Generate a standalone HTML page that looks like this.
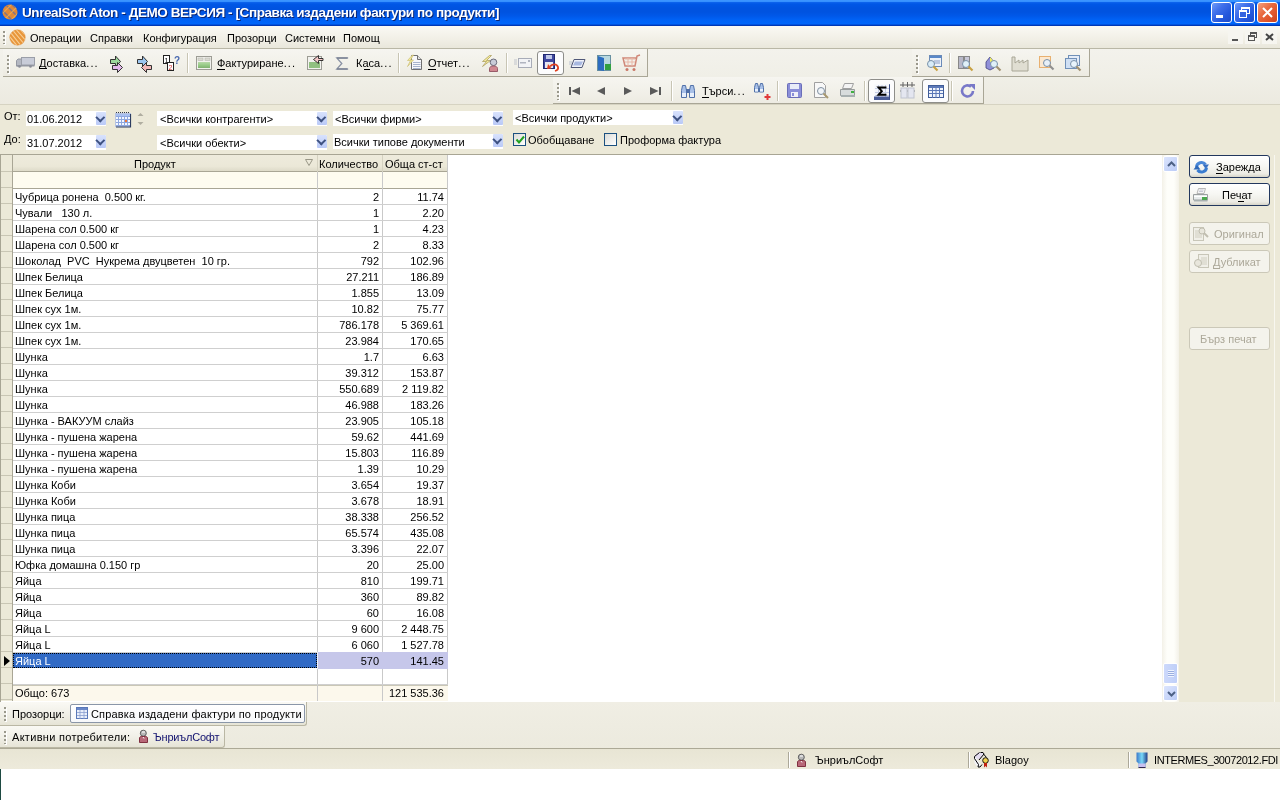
<!DOCTYPE html>
<html><head><meta charset="utf-8">
<style>
*{margin:0;padding:0;box-sizing:border-box}
html,body{width:1280px;height:800px;overflow:hidden;background:#fff;font-family:"Liberation Sans",sans-serif;font-size:11px;color:#000}
#root{position:absolute;left:0;top:0;width:1280px;height:800px;will-change:transform}
.a{position:absolute}
svg{position:absolute;overflow:visible}
.t{position:absolute;white-space:pre;line-height:13px}
#title{left:0;top:0;width:1280px;height:26px;background:linear-gradient(#3D96FF 0px,#3590FF 1.5px,#0B62EC 2.5px,#0057E6 4px,#0053E0 8px,#0053E0 12px,#0058E9 16px,#0062F6 20px,#0066FA 24px,#0040C4 25px,#0030A8 26px)}
#title .tt{left:22px;top:5px;color:#fff;font-weight:bold;font-size:13.5px;letter-spacing:-0.42px;text-shadow:1px 1px 0 #0A2470;white-space:nowrap;line-height:15px}
.wb{width:21px;height:21px;top:2px;border:1px solid #fff;border-radius:3px;background:linear-gradient(135deg,#6E9BFA 0%,#3F6FEA 35%,#2457DC 70%,#1E4BC8 100%)}
#menu{left:0;top:26px;width:1280px;height:23px;background:linear-gradient(#FAF9F4,#F1EFE6 60%,#E9E7DB);border-bottom:1px solid #B9B7A6}
#menu .t{top:6px}
.mdi{top:30px;width:15px;height:14px}
#tbarea{left:0;top:49px;width:1280px;height:55px;background:linear-gradient(#F3F2EC,#F0EFE7 50%,#ECEAE0)}
.bar{position:absolute;background:linear-gradient(#F6F5F0,#F2F1EA 50%,#EDEBE2);border-bottom:1px solid #A9A696;border-right:1px solid #A9A696}
.grip{position:absolute;width:2px;background:repeating-linear-gradient(#9A988C 0 2px,transparent 2px 4px);box-shadow:1px 1px 0 #fff}
.sep{position:absolute;width:1px;background:#C8C5B4;box-shadow:1px 0 0 #FFFFFF}
.chk{position:absolute;border:1px solid #8E8E8A;border-radius:3px;background:#FCFCFD}
#filter{left:0;top:104px;width:1280px;height:50px;background:#ECE9D8;border-top:1px solid #D6D3C2}
.fld{position:absolute;background:#fff;height:15px}
.dd{position:absolute;width:10px;height:13px;background:linear-gradient(#D8E2FD,#B9C9F7);border-radius:1px}
.dd::after{content:"";position:absolute;left:1.2px;top:1.8px;width:4.6px;height:4.6px;border-right:2.3px solid #3E5282;border-bottom:2.3px solid #3E5282;transform:rotate(45deg)}
.cb{position:absolute;width:13px;height:13px;border:1px solid #1C5180;background:linear-gradient(135deg,#DCDCD7,#FFFFFF)}
#grid{left:0;top:154px;width:1163px;height:548px;background:#fff;border-top:1px solid #A8A594;border-left:1px solid #A8A594}
.hdr{left:1px;top:155px;width:447px;height:17px;background:linear-gradient(#EEEBDC,#EBE8D8 70%,#DEDBC9);border-bottom:1px solid #A9A695}
.flt{left:1px;top:172px;width:447px;height:17px;background:#FEFCF0;border-bottom:1px solid #A9A695}
.ind{left:1px;top:155px;width:12px;height:546px;background:linear-gradient(#ECE9D8 0 1px,transparent 1px),repeating-linear-gradient(#C9C6B4 0 1px,#ECE9D8 1px 16px);border-right:1px solid #A9A695}
.vl{position:absolute;width:1px;background:#C9C9C9}
.r{position:absolute;left:13px;width:435px;height:16px;border-bottom:1px solid #CFCFCF}
.r i,.r b,.r u{position:absolute;font-style:normal;font-weight:normal;text-decoration:none;white-space:pre;top:2px;line-height:13px}
.r i{left:2px}
.r b{right:69px}
.r u{right:4px}
.btn{position:absolute;left:1189px;width:81px;height:23px;border:1px solid #22375E;border-radius:3px;background:linear-gradient(#FFFFFF,#F6F6F2 50%,#ECEBE4 85%,#D6D4C8)}
.btn.dis{border-color:#CBC8B8;background:#F4F3EC;color:#ACA899}
.bar2{position:absolute;background:linear-gradient(#FAF9F4,#F1F0E8 50%,#E6E4D6);border-bottom:1px solid #BAB7A4;border-right:1px solid #BAB7A4;border-radius:0 0 3px 0}
#status{left:0;top:748px;width:1280px;height:21px;background:linear-gradient(#E8E5D4,#EDEADB);border-top:1px solid #ACA996}
.ssep{position:absolute;top:752px;width:1px;height:16px;background:#ACA899;box-shadow:1px 0 0 #fff}
.dt{letter-spacing:1.1px}
</style></head><body>
<div id="root">
<div id="title" class="a">
  <svg style="left:2px;top:4px" width="16" height="16" viewBox="0 0 16 16"><defs><clipPath id="tc"><circle cx="8" cy="8" r="7.5"/></clipPath></defs><circle cx="8" cy="8" r="7.5" fill="#E08838"/><g clip-path="url(#tc)"><path d="M-2 4L12 18M2 -1L17 14M-3 9L7 19M6 -3L19 9" stroke="#5C6CA8" stroke-width="1.3" opacity=".75"/><path d="M-2 12L12 -2M2 16L17 1M-3 7L8 -4M7 18L19 6" stroke="#F0B050" stroke-width="1.1" opacity=".8"/></g></svg>
  <div class="a tt">UnrealSoft Aton - ДЕМО ВЕРСИЯ - [Справка издадени фактури по продукти]</div>
  <div class="a wb" style="left:1211px"><div class="a" style="left:4px;top:12px;width:7px;height:3px;background:#fff"></div></div>
  <div class="a wb" style="left:1234px"><div class="a" style="left:6px;top:4px;width:9px;height:7px;border:1px solid #fff;border-top-width:2px"></div><div class="a" style="left:4px;top:7px;width:8px;height:8px;border:1px solid #fff;border-top-width:2px;background:#3463E0"></div></div>
  <div class="a wb" style="left:1257px;background:linear-gradient(135deg,#F3A080 0%,#E86A40 40%,#E0552C 70%,#C8441F 100%)"><svg style="left:3px;top:3px" width="13" height="13"><path d="M2 2L11 11M11 2L2 11" stroke="#fff" stroke-width="2"/></svg></div>
</div>
<div id="menu" class="a">
  <div class="grip" style="left:3px;top:31px;height:13px;position:absolute;top:5px"></div>
  <svg style="left:9px;top:3px" width="17" height="17" viewBox="0 0 17 17"><defs><clipPath id="mc"><circle cx="8.5" cy="8.5" r="7.8"/></clipPath></defs><circle cx="8.5" cy="8.5" r="7.8" fill="#E8963A"/><g clip-path="url(#mc)" stroke="#F8D098" stroke-width="1.1"><path d="M-4 2L10 19M-2 -1L13 18M1 -2L16 16M4 -3L19 14M7 -4L21 11"/></g><circle cx="8.5" cy="8.5" r="7.8" fill="none" stroke="#D88838" stroke-width=".6" opacity=".6"/></svg>
  <span class="t" style="left:30px">Операции</span>
  <span class="t" style="left:90px">Справки</span>
  <span class="t" style="left:143px">Конфигурация</span>
  <span class="t" style="left:227px">Прозорци</span>
  <span class="t" style="left:285px">Системни</span>
  <span class="t" style="left:343px">Помощ</span>
</div>
<div class="a" style="left:1228px;top:30px;width:15px;height:14px;background:#F6F5F0"><div class="a" style="left:4px;top:9px;width:6px;height:2px;background:#555"></div></div>
<div class="a" style="left:1245px;top:30px;width:15px;height:14px;background:#F6F5F0"><div class="a" style="left:5px;top:2px;width:7px;height:6px;border:1px solid #555;border-top-width:2px"></div><div class="a" style="left:3px;top:5px;width:7px;height:6px;border:1px solid #555;border-top-width:2px;background:#F6F5F0"></div></div>
<div class="a" style="left:1262px;top:30px;width:15px;height:14px;background:#F6F5F0"><svg style="left:3px;top:3px" width="9" height="8"><path d="M1 1L8 7M8 1L1 7" stroke="#444" stroke-width="2"/></svg></div>
<div id="tbarea" class="a"></div>
<!-- toolbar 1 left -->
<div class="bar" style="left:3px;top:49px;width:645px;height:28px"></div>
<div class="grip" style="left:7px;top:55px;height:18px"></div>
<svg style="left:16px;top:57px" width="19" height="11" viewBox="0 0 19 11"><path d="M0.5 3.5l1.5-1.5h3.5v7h-5z" fill="#B4B8C2" stroke="#9498A2"/><rect x="5.5" y="0.5" width="13" height="7.5" fill="#C8CCD8" stroke="#9A9EA8"/><rect x="0.5" y="8" width="18" height="1.5" fill="#9498A2"/><circle cx="3.5" cy="9.5" r="1.3" fill="#8A8E98"/><circle cx="14.5" cy="9.5" r="1.3" fill="#8A8E98"/></svg>
<span class="t" style="left:39px;top:57px">Доставка<span class="dt">...</span></span><div class="a" style="left:39px;top:68px;width:8px;height:1px;background:#000"></div>
<svg style="left:110px;top:55px" width="14" height="18" viewBox="0 0 14 18"><path d="M0.5 4.5h5v-3.5l5 5.5-5 5.5v-3.5h-5z" fill="#9CD89C" stroke="#333" stroke-width="1"/><path d="M2.5 10.5h5v-3l5 5-5 5v-3h-5z" fill="#E4B8EC" stroke="#333" stroke-width="1"/></svg>
<svg style="left:137px;top:55px" width="15" height="18" viewBox="0 0 15 18"><path d="M0.5 4.5h5v-3.5l5 5.5-5 5.5v-3.5h-5z" fill="#9DC6F0" stroke="#333" stroke-width="1"/><path d="M14.5 10.5h-5v-3l-5 5 5 5v-3h5z" fill="#F3B8B8" stroke="#333" stroke-width="1"/></svg>
<svg style="left:163px;top:55px" width="18" height="17" viewBox="0 0 18 17"><rect x="0.5" y="0.5" width="6" height="8" fill="#fff" stroke="#222"/><text x="1.5" y="7.5" font-size="7" font-family="Liberation Sans">1</text><rect x="4.5" y="7.5" width="6" height="8" fill="#fff" stroke="#222"/><text x="5.5" y="14.5" font-size="7" fill="#C33" font-family="Liberation Sans">2</text><text x="11" y="9" font-size="10" font-weight="bold" fill="#4A6AB0" font-family="Liberation Sans">?</text></svg>
<div class="sep" style="left:187px;top:53px;height:20px"></div>
<svg style="left:196px;top:56px" width="16" height="14" viewBox="0 0 16 14"><defs><linearGradient id="gr1" x1="0" y1="0" x2="0" y2="1"><stop offset="0" stop-color="#B8D8A8"/><stop offset=".5" stop-color="#98CC88"/><stop offset="1" stop-color="#80B070"/></linearGradient></defs><rect x="0.5" y="0.5" width="15" height="13" fill="#F2F2EE" stroke="#9C9C94"/><rect x="2" y="2" width="5" height="2.5" fill="#DADAD2" stroke="#B8B8B0" stroke-width=".6"/><rect x="9" y="2" width="5" height="2.5" fill="#DADAD2" stroke="#B8B8B0" stroke-width=".6"/><rect x="2" y="6" width="12" height="6" fill="url(#gr1)"/></svg>
<span class="t" style="left:217px;top:57px">Фактуриране<span class="dt">...</span></span><div class="a" style="left:217px;top:69px;width:8px;height:1px;background:#000"></div>
<svg style="left:307px;top:55px" width="17" height="15" viewBox="0 0 17 15"><rect x="0.5" y="1.5" width="14" height="13" fill="#F2F2EE" stroke="#9C9C94"/><rect x="2" y="7" width="11" height="6" fill="#90C080"/><path d="M16 3.5h-4.5v-3l-5 4 5 4v-3h4.5z" fill="#F4C8C8" stroke="#222" stroke-width="0.9"/></svg>
<svg style="left:336px;top:57px" width="12" height="13" viewBox="0 0 12 13"><path d="M11.5 1.5V1H0.8l5 5.5-5 5.5H11.5v-0.5" fill="none" stroke="#8A92A4" stroke-width="1.3"/><path d="M1 1h10.5M1 12h10.5" stroke="#70788A" stroke-width="1.2"/></svg>
<span class="t" style="left:356px;top:57px">Каса<span class="dt">...</span></span><div class="a" style="left:364px;top:69px;width:6px;height:1px;background:#000"></div>
<div class="sep" style="left:398px;top:53px;height:20px"></div>
<svg style="left:407px;top:54px" width="16" height="17" viewBox="0 0 16 17"><path d="M4.5 1.5h6l4 4v10h-10z" fill="#F8F8FA" stroke="#707070"/><path d="M10.5 1.5v4h4" fill="#E0E0E0" stroke="#707070"/><path d="M6 8.5h7.5M6 10.5h7.5M6 12.5h7.5M6 14.5h7.5" stroke="#A8B4CC"/><path d="M5.5 1L0.5 6.5h3l-3 6 6-6.5h-3l3-5z" fill="#F4EC9C" stroke="#C8B868" stroke-width=".6"/></svg>
<span class="t" style="left:428px;top:57px">Отчет<span class="dt">...</span></span><div class="a" style="left:428px;top:69px;width:8px;height:1px;background:#000"></div>
<svg style="left:481px;top:54px" width="18" height="18" viewBox="0 0 18 18"><path d="M8.5 1.5L1.5 7.5h4l-4 5 8-6h-4l5-5z" fill="#F4EC9C" stroke="#A89858" stroke-width=".7"/><circle cx="12.5" cy="8.3" r="3.3" fill="#C8CCD8" stroke="#606070" stroke-width=".9"/><path d="M8.5 17.5v-3c0-1.5 1.5-2.5 4-2.5s4 1 4 2.5v3z" fill="#D08890" stroke="#905060" stroke-width=".9"/></svg>
<div class="sep" style="left:506px;top:53px;height:20px"></div>
<svg style="left:514px;top:57px" width="18" height="12" viewBox="0 0 18 12"><path d="M0 3h3M0 5h3M0 7h3" stroke="#C0C4CC"/><rect x="4.5" y="1.5" width="13" height="9" fill="#F2F3F6" stroke="#A8ACB8"/><rect x="6" y="5" width="6" height="1.5" fill="#B0B4C0"/><rect x="14" y="3" width="2" height="2" fill="#B0B4C0"/></svg>
<div class="chk" style="left:537px;top:51px;width:27px;height:24px"></div>
<svg style="left:543px;top:54px" width="17" height="18" viewBox="0 0 17 18"><rect x="0.5" y="0.5" width="11" height="14" fill="#4048A0" stroke="#202870"/><rect x="3" y="1" width="6" height="4" fill="#C0C8E8"/><rect x="2" y="8" width="8" height="6" fill="#E8E8F0"/><path d="M7 12.5c2-3 7-3 8 0.5 0.5 2-1 3.5-3 4" fill="none" stroke="#E04020" stroke-width="1.8"/><path d="M5 10l3.5 4.5-4.5 0.5z" fill="#E04020"/></svg>
<svg style="left:569px;top:57px" width="17" height="12" viewBox="0 0 17 12"><path d="M0 5h3M0 7h3" stroke="#B8C0D0"/><path d="M5 2.5h11l-3 8H2z" fill="#F0F2FA" stroke="#505878" stroke-width="1"/><path d="M6 4.5h8l-2 4H4z" fill="#A8B8E0"/></svg>
<svg style="left:597px;top:55px" width="15" height="17" viewBox="0 0 15 17"><rect x="0.5" y="0.5" width="13" height="15" fill="#B8D8E0" stroke="#6890A0"/><path d="M1 1l6 2v13l-6-1z" fill="#2C6CC0"/><rect x="8" y="9" width="6" height="6" fill="#30A040"/></svg>
<svg style="left:622px;top:54px" width="19" height="18" viewBox="0 0 19 18"><path d="M18 1l-3 1-2 10H3L1 4h13" fill="none" stroke="#D08878" stroke-width="1.5"/><path d="M3 5h10M3 8h10M6 4v8M10 4v8" stroke="#E8B8A8" stroke-width="1"/><circle cx="5" cy="15.5" r="1.5" fill="#C87868"/><circle cx="12" cy="15.5" r="1.5" fill="#C87868"/></svg>
<!-- toolbar 1 right -->
<div class="bar" style="left:912px;top:49px;width:178px;height:28px"></div>
<div class="grip" style="left:916px;top:55px;height:18px"></div>
<svg style="left:925px;top:55px" width="17" height="17" viewBox="0 0 17 17"><rect x="4.5" y="0.5" width="12" height="11" fill="#EEF2F8" stroke="#6A8AB8"/><rect x="5" y="1" width="11" height="2" fill="#5A88C8"/><path d="M9 6h6M9 8h6" stroke="#8AA0C8"/><circle cx="6" cy="9" r="3.5" fill="#D8ECF8" stroke="#7890A8"/><path d="M8.5 11.5l4 4" stroke="#C8A040" stroke-width="2.2"/></svg>
<div class="sep" style="left:949px;top:53px;height:20px"></div>
<svg style="left:958px;top:55px" width="17" height="17" viewBox="0 0 17 17"><rect x="0.5" y="1.5" width="5" height="12" fill="#B8B8C8" stroke="#888"/><rect x="6.5" y="1.5" width="5" height="12" fill="#C8C8D8" stroke="#888"/><circle cx="8" cy="9" r="3.5" fill="#E0F0F8" stroke="#7890A8"/><path d="M10.5 11.5l4 4" stroke="#C8A040" stroke-width="2.2"/></svg>
<svg style="left:985px;top:55px" width="17" height="17" viewBox="0 0 17 17"><path d="M1 7l4-5 4 5v6l-4 2-4-2z" fill="#9090D8" stroke="#404080" stroke-width=".8"/><path d="M5 2l4 5h-4z" fill="#F0F060"/><circle cx="9" cy="9" r="3.5" fill="#E0F0F8" stroke="#7890A8"/><path d="M11.5 11.5l4 4" stroke="#A09070" stroke-width="2.2"/></svg>
<svg style="left:1011px;top:55px" width="19" height="17" viewBox="0 0 19 17"><path d="M1 16V2h3v6l4-3v3l4-3v3l5-3v11z" fill="#E0DED2" stroke="#A8A696"/></svg>
<svg style="left:1039px;top:55px" width="17" height="17" viewBox="0 0 17 17"><rect x="0.5" y="1.5" width="11" height="11" fill="#FBE8D0" stroke="#E8B070"/><circle cx="8" cy="8" r="3.5" fill="#E8F0F8" stroke="#7890A8"/><path d="M10.5 10.5l4 4" stroke="#909090" stroke-width="2.2"/></svg>
<svg style="left:1065px;top:55px" width="19" height="17" viewBox="0 0 19 17"><rect x="3.5" y="0.5" width="11" height="10" fill="#E4ECF8" stroke="#7090B8"/><rect x="0.5" y="3.5" width="11" height="10" fill="#D0E0F4" stroke="#7090B8"/><circle cx="9" cy="9" r="3.5" fill="#E8F4FC" stroke="#7890A8"/><path d="M11.5 11.5l4 4" stroke="#A09070" stroke-width="2.2"/></svg>
<!-- toolbar 2 -->
<div class="bar" style="left:553px;top:77px;width:431px;height:27px"></div>
<div class="grip" style="left:557px;top:83px;height:17px"></div>
<svg style="left:569px;top:87px" width="12" height="8" viewBox="0 0 12 8"><rect x="0" y="0" width="2" height="8" fill="#5A5A5A"/><path d="M11 0v8L2.5 4z" fill="#5A5A5A"/></svg>
<svg style="left:597px;top:87px" width="9" height="8" viewBox="0 0 9 8"><path d="M8 0v8L0 4z" fill="#5A5A5A"/></svg>
<svg style="left:624px;top:87px" width="9" height="8" viewBox="0 0 9 8"><path d="M0 0v8l8-4z" fill="#5A5A5A"/></svg>
<svg style="left:650px;top:87px" width="12" height="8" viewBox="0 0 12 8"><path d="M0 0v8l8.5-4z" fill="#5A5A5A"/><rect x="9" y="0" width="2" height="8" fill="#5A5A5A"/></svg>
<div class="sep" style="left:671px;top:81px;height:20px"></div>
<svg style="left:680px;top:83px" width="16" height="16" viewBox="0 0 16 16"><path d="M1.5 7.5l1-5h3l1 5v7h-5z" fill="#A8C0E8" stroke="#5070A8"/><path d="M9.5 7.5l1-5h3l1 5v7h-5z" fill="#A8C0E8" stroke="#5070A8"/><rect x="6" y="6" width="4" height="4" fill="#5070A8"/><rect x="2" y="10" width="4" height="4" fill="#E8F0FC"/><rect x="10" y="10" width="4" height="4" fill="#E8F0FC"/></svg>
<span class="t" style="left:702px;top:85px">Търси<span class="dt">...</span></span><div class="a" style="left:702px;top:97px;width:7px;height:1px;background:#000"></div>
<svg style="left:753px;top:82px" width="19" height="19" viewBox="0 0 19 19"><path d="M1.5 5.5l1-4h2l1 4v4.5h-4z" fill="#A8C0E8" stroke="#5070A8"/><path d="M6.5 5.5l1-4h2l1 4v4.5h-4z" fill="#A8C0E8" stroke="#5070A8"/><rect x="2" y="7" width="3" height="2.5" fill="#E8F0FC"/><rect x="7" y="7" width="3" height="2.5" fill="#E8F0FC"/><path d="M11.5 15h6M14.5 12v6" stroke="#E03838" stroke-width="2"/></svg>
<div class="sep" style="left:777px;top:81px;height:20px"></div>
<svg style="left:787px;top:83px" width="15" height="15" viewBox="0 0 15 15"><rect x="0.5" y="0.5" width="14" height="14" rx="1" fill="#8A8ED8" stroke="#6A6EB8"/><rect x="3" y="1" width="9" height="5" fill="#E8ECF8"/><rect x="4" y="9" width="7" height="5" fill="#F0F0F8"/><rect x="5" y="10" width="2" height="3" fill="#8A8ED8"/></svg>
<svg style="left:814px;top:82px" width="16" height="17" viewBox="0 0 16 17"><path d="M0.5 0.5h8l3 3v12h-11z" fill="#F8F8F8" stroke="#A0A0A0"/><circle cx="7" cy="9" r="3.5" fill="#F0F4F8" stroke="#8090A0"/><path d="M9.5 11.5l4.5 4.5" stroke="#A89870" stroke-width="2"/></svg>
<svg style="left:840px;top:83px" width="16" height="15" viewBox="0 0 16 15"><path d="M4.5 0.5h9l-2 5h-9z" fill="#F4F4F4" stroke="#A0A0A0"/><path d="M0.5 6.5h14v6h-14z" fill="#D8DCDC" stroke="#989C9C"/><rect x="1" y="12" width="14" height="2" fill="#A8B0B0"/><rect x="11" y="8" width="3" height="2" fill="#40B040"/></svg>
<div class="sep" style="left:864px;top:81px;height:20px"></div>
<div class="chk" style="left:868px;top:79px;width:27px;height:24px"></div>
<svg style="left:874px;top:84px" width="16" height="16" viewBox="0 0 16 16"><rect x="0.5" y="0.5" width="15" height="15" fill="#F4F6FC"/><path d="M1 4.5h14M1 8.5h14M1 11.5h14M4.5 1v12M8 1v12M11.5 1v12" stroke="#C4CCE4" stroke-width="1"/><rect x="0" y="12.5" width="16" height="3.5" fill="#4A5C98"/><path d="M16 0.5h-0.5v15" fill="none" stroke="#3A4C88"/><path d="M11.5 4.5V3.5h-7l3.3 3.7-3.3 3.6h7v-1" fill="none" stroke="#000" stroke-width="1.9"/></svg>
<svg style="left:900px;top:82px" width="15" height="17" viewBox="0 0 15 17"><path d="M0 3h15M0 9h15M3 0v5M7.5 0v5M12 0v5" stroke="#606060"/><rect x="1" y="6" width="6" height="10" fill="#E4E6F0" stroke="#C0C4D0"/><rect x="8" y="6" width="6" height="10" fill="#E4E6F0" stroke="#C0C4D0"/></svg>
<div class="chk" style="left:922px;top:79px;width:27px;height:24px"></div>
<svg style="left:928px;top:85px" width="16" height="13" viewBox="0 0 16 13"><rect x="0.5" y="0.5" width="15" height="12" fill="#F0F4FC" stroke="#405C98"/><rect x="1" y="1" width="14" height="2" fill="#5C78B8"/><path d="M1 5.5h14M1 8.5h14M4.5 3v10M8 3v10M11.5 3v10" stroke="#5C78B8" stroke-width="1"/></svg>
<div class="sep" style="left:951px;top:81px;height:20px"></div>
<svg style="left:960px;top:83px" width="16" height="16" viewBox="0 0 16 16"><path d="M13 8a5.5 5.5 0 1 1-2-4.3" fill="none" stroke="#7878C8" stroke-width="2.6"/><path d="M9 1h6v6z" fill="#7878C8"/></svg>
<div id="filter" class="a"></div>
<span class="t" style="left:4px;top:110px">От:</span>
<span class="t" style="left:4px;top:133px">До:</span>
<div class="fld" style="left:26px;top:111px;width:80px"></div><span class="t" style="left:27px;top:113px">01.06.2012</span><div class="dd" style="left:96px;top:112px"></div>
<div class="fld" style="left:26px;top:135px;width:80px"></div><span class="t" style="left:27px;top:137px">31.07.2012</span><div class="dd" style="left:96px;top:135px"></div>
<svg style="left:115px;top:112px" width="16" height="15" viewBox="0 0 16 15"><path d="M1 0.5h14" stroke="#303848" stroke-dasharray="1 1"/><rect x="0.5" y="1.5" width="15" height="13" fill="#8FA8E0" stroke="#B8C4E0"/><path d="M15.5 2v13H1" fill="none" stroke="#2C3C60" stroke-width="1.2"/><rect x="1" y="2" width="14" height="2" fill="#A8C0F0"/><g fill="#F4F8FF"><rect x="1" y="5" width="2" height="2"/><rect x="4" y="5" width="2" height="2"/><rect x="7" y="5" width="2" height="2"/><rect x="10" y="5" width="2" height="2"/><rect x="13" y="5" width="2" height="2"/><rect x="1" y="8" width="2" height="2"/><rect x="4" y="8" width="2" height="2"/><rect x="7" y="8" width="2" height="2"/><rect x="13" y="8" width="2" height="2"/><rect x="1" y="11" width="2" height="2"/><rect x="4" y="11" width="2" height="2"/><rect x="7" y="11" width="2" height="2"/><rect x="10" y="11" width="2" height="2"/><rect x="13" y="11" width="2" height="2"/></g><rect x="10" y="8" width="2" height="2" fill="#F07838"/></svg>
<svg style="left:137px;top:112px" width="7" height="14" viewBox="0 0 7 14"><path d="M3.5 1l3 3h-6z" fill="#B0AEA0"/><path d="M3.5 13l3-3h-6z" fill="#B0AEA0"/></svg>
<div class="fld" style="left:157px;top:111px;width:170px"></div><span class="t" style="left:160px;top:113px">&lt;Всички контрагенти&gt;</span><div class="dd" style="left:317px;top:112px"></div>
<div class="fld" style="left:157px;top:135px;width:170px"></div><span class="t" style="left:160px;top:137px">&lt;Всички обекти&gt;</span><div class="dd" style="left:317px;top:135px"></div>
<div class="fld" style="left:333px;top:111px;width:170px"></div><span class="t" style="left:335px;top:113px">&lt;Всички фирми&gt;</span><div class="dd" style="left:493px;top:112px"></div>
<div class="fld" style="left:333px;top:134px;width:170px"></div><span class="t" style="left:334px;top:136px">Всички типове документи</span><div class="dd" style="left:493px;top:134px"></div>
<div class="fld" style="left:513px;top:110px;width:170px"></div><span class="t" style="left:515px;top:112px">&lt;Всички продукти&gt;</span><div class="dd" style="left:673px;top:111px"></div>
<div class="cb" style="left:513px;top:133px"><svg style="left:2px;top:2px" width="9" height="8" viewBox="0 0 9 8"><path d="M0.5 3.5l2.5 3 5-6" fill="none" stroke="#21A121" stroke-width="2"/></svg></div>
<span class="t" style="left:528px;top:134px">Обобщаване</span>
<div class="cb" style="left:604px;top:133px"></div>
<span class="t" style="left:620px;top:134px">Проформа фактура</span>
<!-- grid -->
<div id="grid" class="a"></div>
<div class="a hdr"></div>
<div class="a flt"></div>
<div class="a ind"></div>
<div class="vl" style="left:317px;top:155px;height:17px;background:#D5D2C1"></div>
<div class="vl" style="left:382px;top:155px;height:17px;background:#D5D2C1"></div>
<div class="vl" style="left:447px;top:155px;height:546px"></div>
<div class="vl" style="left:317px;top:172px;height:529px"></div>
<div class="vl" style="left:382px;top:172px;height:529px"></div>
<span class="t" style="left:134px;top:158px">Продукт</span>
<svg style="left:305px;top:159px" width="8" height="7" viewBox="0 0 8 7"><path d="M0.5 0.5h7l-3.5 6z" fill="none" stroke="#9A9888"/></svg>
<span class="t" style="left:319px;top:158px">Количество</span>
<span class="t" style="left:385px;top:158px">Обща ст-ст</span>
<div class="r" style="top:189px"><i>Чубрица ронена  0.500 кг.</i><b>2</b><u>11.74</u></div>
<div class="r" style="top:205px"><i>Чували   130 л.</i><b>1</b><u>2.20</u></div>
<div class="r" style="top:221px"><i>Шарена сол 0.500 кг</i><b>1</b><u>4.23</u></div>
<div class="r" style="top:237px"><i>Шарена сол 0.500 кг</i><b>2</b><u>8.33</u></div>
<div class="r" style="top:253px"><i>Шоколад  PVC  Нукрема двуцветен  10 гр.</i><b>792</b><u>102.96</u></div>
<div class="r" style="top:269px"><i>Шпек Белица</i><b>27.211</b><u>186.89</u></div>
<div class="r" style="top:285px"><i>Шпек Белица</i><b>1.855</b><u>13.09</u></div>
<div class="r" style="top:301px"><i>Шпек сух 1м.</i><b>10.82</b><u>75.77</u></div>
<div class="r" style="top:317px"><i>Шпек сух 1м.</i><b>786.178</b><u>5 369.61</u></div>
<div class="r" style="top:333px"><i>Шпек сух 1м.</i><b>23.984</b><u>170.65</u></div>
<div class="r" style="top:349px"><i>Шунка</i><b>1.7</b><u>6.63</u></div>
<div class="r" style="top:365px"><i>Шунка</i><b>39.312</b><u>153.87</u></div>
<div class="r" style="top:381px"><i>Шунка</i><b>550.689</b><u>2 119.82</u></div>
<div class="r" style="top:397px"><i>Шунка</i><b>46.988</b><u>183.26</u></div>
<div class="r" style="top:413px"><i>Шунка - ВАКУУМ слайз</i><b>23.905</b><u>105.18</u></div>
<div class="r" style="top:429px"><i>Шунка - пушена жарена</i><b>59.62</b><u>441.69</u></div>
<div class="r" style="top:445px"><i>Шунка - пушена жарена</i><b>15.803</b><u>116.89</u></div>
<div class="r" style="top:461px"><i>Шунка - пушена жарена</i><b>1.39</b><u>10.29</u></div>
<div class="r" style="top:477px"><i>Шунка Коби</i><b>3.654</b><u>19.37</u></div>
<div class="r" style="top:493px"><i>Шунка Коби</i><b>3.678</b><u>18.91</u></div>
<div class="r" style="top:509px"><i>Шунка пица</i><b>38.338</b><u>256.52</u></div>
<div class="r" style="top:525px"><i>Шунка пица</i><b>65.574</b><u>435.08</u></div>
<div class="r" style="top:541px"><i>Шунка пица</i><b>3.396</b><u>22.07</u></div>
<div class="r" style="top:557px"><i>Юфка домашна 0.150 гр</i><b>20</b><u>25.00</u></div>
<div class="r" style="top:573px"><i>Яйца</i><b>810</b><u>199.71</u></div>
<div class="r" style="top:589px"><i>Яйца</i><b>360</b><u>89.82</u></div>
<div class="r" style="top:605px"><i>Яйца</i><b>60</b><u>16.08</u></div>
<div class="r" style="top:621px"><i>Яйца L</i><b>9 600</b><u>2 448.75</u></div>
<div class="r" style="top:637px"><i>Яйца L</i><b>6 060</b><u>1 527.78</u></div>
<div class="r" style="top:653px;border-bottom:0"></div>
<div class="a" style="left:318px;top:652px;width:130px;height:17px;background:#C6C7EA"></div>
<div class="a" style="left:317px;top:652px;width:1px;height:17px;background:#F2F2F8"></div>
<div class="a" style="left:13px;top:653px;width:304px;height:15px;background:#316AC5;outline:1px dotted #000;outline-offset:-1px"></div>
<div class="r" style="top:653px;border-bottom:0"><i style="color:#fff">Яйца L</i><b>570</b><u>141.45</u></div>
<svg style="left:4px;top:656px" width="6" height="10" viewBox="0 0 6 10"><path d="M0 0l6 5-6 5z" fill="#000"/></svg>
<div class="r" style="top:669px"></div>
<div class="a" style="left:13px;top:685px;width:435px;height:16px;background:#FCF8EC;border-top:1px solid #CAC7B6"></div>
<div class="vl" style="left:317px;top:685px;height:16px"></div>
<div class="vl" style="left:382px;top:685px;height:16px"></div>
<div class="r" style="top:685px;border-bottom:0"><i>Общо: 673</i><u>121 535.36</u></div>
<!-- scrollbar -->
<div class="a" style="left:1162px;top:155px;width:17px;height:547px;background:linear-gradient(90deg,#F3F1E8,#FEFEFA 30%,#FEFEFA 70%,#F3F1E8)"></div>
<div class="a" style="left:1163px;top:156px;width:15px;height:16px;border-radius:2px;background:linear-gradient(135deg,#DCE5FD,#BBCCF7);border:1px solid #fff"><svg style="left:3px;top:4px" width="9" height="6" viewBox="0 0 9 6"><path d="M1 5l3.5-3.5L8 5" fill="none" stroke="#4D6185" stroke-width="2"/></svg></div>
<div class="a" style="left:1163px;top:663px;width:15px;height:21px;border-radius:2px;background:linear-gradient(90deg,#CDD9FB,#BFCFF8);border:1px solid #fff"><div class="a" style="left:4px;top:6px;width:6px;height:7px;background:repeating-linear-gradient(#EEF3FF 0 1px,#9AAEE0 1px 2px)"></div></div>
<div class="a" style="left:1163px;top:685px;width:15px;height:16px;border-radius:2px;background:linear-gradient(135deg,#DCE5FD,#BBCCF7);border:1px solid #fff"><svg style="left:3px;top:5px" width="9" height="6" viewBox="0 0 9 6"><path d="M1 1l3.5 3.5L8 1" fill="none" stroke="#4D6185" stroke-width="2"/></svg></div>
<!-- right panel -->
<div class="a" style="left:1179px;top:154px;width:101px;height:548px;background:#ECE9D8"></div><div class="a" style="left:1162px;top:154px;width:17px;height:1px;background:#A8A594"></div>
<div class="a" style="left:1274px;top:155px;width:1px;height:547px;background:#F8F7F0"></div>
<div class="btn" style="top:155px"></div>
<svg style="left:1193px;top:159px" width="17" height="16" viewBox="0 0 17 16"><path d="M3.5 8.5A5 5 0 0 1 12.5 5.5" fill="none" stroke="#4A88D8" stroke-width="3"/><path d="M9.5 5.5h6.5l-3.2 4.5z" fill="#3A70C0"/><path d="M13.5 8.5A5 5 0 0 1 4.5 11" fill="none" stroke="#3A7CD0" stroke-width="3"/><path d="M0.5 10.5h7l-3.5-4.5z" fill="#2E68B8"/></svg>
<span class="t" style="left:1216px;top:161px">Зарежда</span><div class="a" style="left:1216px;top:173px;width:7px;height:1px;background:#000"></div>
<div class="btn" style="top:183px"></div>
<svg style="left:1193px;top:187px" width="16" height="15" viewBox="0 0 16 15"><path d="M5.5 1.5h7l-1.5 5h-7z" fill="#F4F4F4" stroke="#A8A8A8" stroke-width=".8"/><path d="M6.5 3h4M6 4.5h4" stroke="#B8B8C8" stroke-width=".7"/><path d="M0.5 7.5h14v5.5h-14z" fill="#E8ECEC" stroke="#9CA0A0"/><path d="M1 9.5h13" stroke="#FFFFFF"/><rect x="9" y="10" width="5" height="3" fill="#4CA850"/><rect x="1" y="13" width="13.5" height="1.5" fill="#A8B0B0"/></svg>
<span class="t" style="left:1222px;top:189px">Печат</span><div class="a" style="left:1238px;top:201px;width:6px;height:1px;background:#000"></div>
<div class="btn dis" style="top:222px"></div>
<svg style="left:1193px;top:225px" width="17" height="17" viewBox="0 0 17 17"><rect x="0.5" y="2.5" width="10" height="13" fill="#F0EFE8" stroke="#C8C6B8"/><path d="M2 6h7M2 8h7M2 10h7M2 12h7" stroke="#D0CEC0"/><circle cx="9" cy="6" r="3" fill="#E8E6DC" stroke="#C0BEB0"/><path d="M11 8l4 4" stroke="#C0BEB0" stroke-width="2"/></svg>
<span class="t" style="left:1214px;top:228px;color:#ACA899">Оригинал</span>
<div class="btn dis" style="top:250px"></div>
<svg style="left:1193px;top:253px" width="17" height="17" viewBox="0 0 17 17"><rect x="5.5" y="1.5" width="10" height="13" fill="#F0EFE8" stroke="#C8C6B8"/><path d="M8 5h6M8 7h6M8 9h6M8 11h6" stroke="#D0CEC0"/><circle cx="5" cy="10" r="3.5" fill="#E8E6DC" stroke="#C0BEB0"/></svg>
<span class="t" style="left:1213px;top:256px;color:#ACA899">Дубликат</span><div class="a" style="left:1213px;top:268px;width:7px;height:1px;background:#ACA899"></div>
<div class="btn dis" style="top:327px"></div>
<span class="t" style="left:1200px;top:333px;color:#ACA899">Бърз печат</span>
<!-- windows bar -->
<div class="a" style="left:0;top:702px;width:1280px;height:47px;background:linear-gradient(#F0EEE4,#ECEADE)"></div>
<div class="bar2" style="left:0;top:702px;width:307px;height:24px"></div>
<div class="grip" style="left:4px;top:707px;height:14px"></div>
<span class="t" style="left:12px;top:708px">Прозорци:</span>
<div class="a" style="left:70px;top:704px;width:235px;height:19px;border:1px solid #8A96A8;border-radius:2px;background:linear-gradient(#FFFFFF,#F7F8FA)"></div>
<svg style="left:76px;top:707px" width="12" height="12" viewBox="0 0 12 12"><rect x="0.5" y="0.5" width="11" height="11" fill="#E8EEFA" stroke="#5A78B8"/><rect x="1" y="1" width="10" height="2" fill="#6A88C8"/><path d="M1 5.5h10M1 8.5h10M4 3v9M8 3v9" stroke="#8AA0D0" stroke-width=".8"/></svg>
<span class="t" style="left:91px;top:708px;letter-spacing:0.17px">Справка издадени фактури по продукти</span>
<div class="bar2" style="left:0;top:726px;width:225px;height:22px"></div>
<div class="grip" style="left:4px;top:731px;height:13px"></div>
<span class="t" style="left:12px;top:731px;letter-spacing:0.3px">Активни потребители:</span>
<svg style="left:139px;top:730px" width="9" height="13" viewBox="0 0 9 13"><circle cx="4.3" cy="3.2" r="3" fill="#B8B8B8" stroke="#606060" stroke-width="1"/><path d="M3 2h3" stroke="#fff" stroke-width="1"/><path d="M0.5 12.5v-4.5c0-1 1-1.5 2-1.5h4c1 0 2 .5 2 1.5v4.5z" fill="#B86878" stroke="#803040" stroke-width="1"/><path d="M4 7l1 1.5" stroke="#fff"/></svg>
<span class="t" style="left:153px;top:731px;color:#121270;letter-spacing:-0.2px">ЪнриълСофт</span>
<!-- status bar -->
<div class="a" style="left:0;top:769px;width:1px;height:31px;background:#1E4A42"></div>
<div id="status" class="a"></div>
<div class="ssep" style="left:788px"></div>
<svg style="left:797px;top:754px" width="9" height="13" viewBox="0 0 9 13"><circle cx="4.3" cy="3.2" r="3" fill="#B8B8B8" stroke="#606060" stroke-width="1"/><path d="M3 2h3" stroke="#fff" stroke-width="1"/><path d="M0.5 12.5v-4.5c0-1 1-1.5 2-1.5h4c1 0 2 .5 2 1.5v4.5z" fill="#B86878" stroke="#803040" stroke-width="1"/><path d="M4 7l1 1.5" stroke="#fff"/></svg>
<span class="t" style="left:815px;top:754px">ЪнриълСофт</span>
<div class="ssep" style="left:968px"></div>
<svg style="left:974px;top:752px" width="15" height="16" viewBox="0 0 15 16"><path d="M6.5 0.5h2.5l1 1.5-4 5h-2.5l-3.5-2 3-4z" fill="#E4DCF0"/><path d="M0.5 4.5l3 3-0.5 0 4 5-1.5 3h-1.5l-3.5-4.5v-6z" fill="#F4F4F8"/><path d="M6.5 0.5h2.5l1 1.5-5 6M9.5 2l3 3.5M0.5 4.5l5-4M0.5 4.5v2l4 6-0.5 2.5h2l2-2.5" fill="none" stroke="#000" stroke-width="1"/><circle cx="11.5" cy="8.5" r="2.8" fill="#F0D050" stroke="#000" stroke-width=".9"/><path d="M10 11v4.5l1.5-1.5 1.5 1.5V11" fill="#C02010"/></svg>
<span class="t" style="left:995px;top:754px">Blagoy</span>
<div class="ssep" style="left:1128px"></div>
<svg style="left:1136px;top:752px" width="12" height="16" viewBox="0 0 12 16"><defs><linearGradient id="gl" x1="0" x2="1"><stop offset="0" stop-color="#3C78C8"/><stop offset=".5" stop-color="#78D8F8"/><stop offset="1" stop-color="#203C88"/></linearGradient></defs><path d="M0.5 0.5h11v9l-2 2v4h-7v-4l-2-2z" fill="url(#gl)"/><path d="M2.5 11.5h7v4h-7z" fill="#C8C0F0"/><path d="M2.5 15.5h7" stroke="#302850"/></svg>
<span class="t" style="left:1154px;top:754px;letter-spacing:-0.42px">INTERMES_30072012.FDI</span>
</div></body></html>
